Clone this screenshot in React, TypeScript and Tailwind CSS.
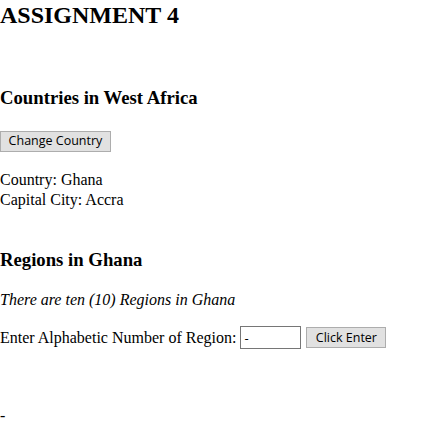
const serif = "font-['Liberation_Serif','Times_New_Roman',serif]";

const Btn = ({ label, w }: { label: string; w: string }) => (
  <button
    className={`${w} h-[21px] flex items-center justify-center bg-[#e1e1e1] border border-[#adadad] text-black text-[12.5px] font-['Open_Sans',sans-serif]`}
  >
    {label}
  </button>
);

export default function App() {
  return (
    <div className={`${serif} text-black bg-white w-[437px] h-[424px] overflow-hidden`}>
      <h1 className="text-[24px] font-bold leading-[30px]">ASSIGNMENT 4</h1>

      <h3 className="mt-[57px] text-[18.72px] font-bold leading-[22px]">Countries in West Africa</h3>
      <div className="mt-[22px]">
        <Btn label="Change Country" w="w-[111px]" />
      </div>

      <div className="mt-[18px] text-[16px] leading-[19.5px]">
        <div>Country: Ghana</div>
        <div>Capital City: Accra</div>
      </div>

      <h3 className="mt-[40px] text-[18.72px] font-bold leading-[22px]">Regions in Ghana</h3>
      <p className="mt-[19px] text-[16px] leading-[20px] italic">There are ten (10) Regions in Ghana</p>

      <div className="mt-[16px] flex items-center h-[23px] text-[16px] leading-[20px]">
        <span>Enter Alphabetic Number of Region:</span>
        <input
          readOnly
          value="-"
          className="ml-[4px] w-[61px] h-[23px] border border-[#767676] px-[3px] text-[13px] font-['Open_Sans',sans-serif] outline-none"
        />
        <div className="ml-[5px]">
          <Btn label="Click Enter" w="w-[80px]" />
        </div>
      </div>

      <p className="mt-[57px] text-[16px] leading-[20px]">-</p>
    </div>
  );
}
